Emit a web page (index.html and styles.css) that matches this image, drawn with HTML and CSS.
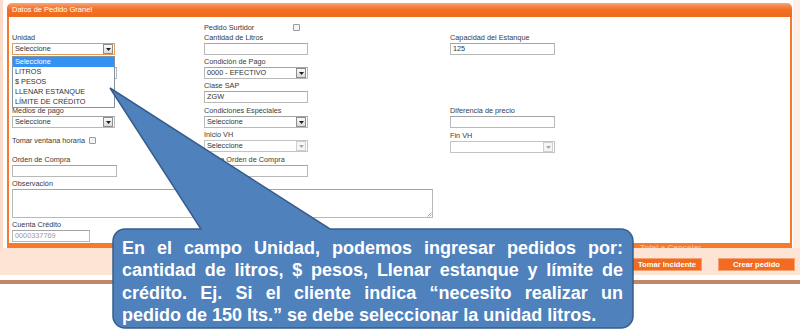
FILE: index.html
```html
<!DOCTYPE html>
<html lang="es">
<head>
<meta charset="utf-8">
<title>Datos de Pedido Granel</title>
<link rel="stylesheet" href="styles.css">
</head>
<body>
<div class="frame">
  <div class="panel">
    <div class="panel-head">Datos de Pedido Granel</div>
    <div class="panel-body">
      <div class="form">
        <div class="surtidor c2 r0"><span class="surtidor-lbl">Pedido Surtidor</span><span class="chk"></span></div>

        <div class="field c1 r1 unidad">
          <div class="lbl">Unidad</div>
          <div class="sel focus w103"><span class="val">Seleccione</span><span class="arr"><svg viewBox="0 0 5 3"><path d="M0 0H5L2.5 3Z"/></svg></span></div>
          <ul class="list">
            <li class="hl">Seleccione</li>
            <li>LITROS</li>
            <li>$ PESOS</li>
            <li>LLENAR ESTANQUE</li>
            <li>LÍMITE DE CRÉDITO</li>
          </ul>
        </div>
        <div class="field c2 r1"><div class="lbl">Cantidad de Litros</div><div class="inp w104"></div></div>
        <div class="field c3 r1"><div class="lbl">Capacidad del Estanque</div><div class="inp w105">125</div></div>

        <div class="field c1 r2"><div class="lbl"></div><div class="inp w105"></div></div>
        <div class="field c2 r2"><div class="lbl">Condición de Pago</div><div class="sel w104"><span class="val">0000 - EFECTIVO</span><span class="arr"><svg viewBox="0 0 5 3"><path d="M0 0H5L2.5 3Z"/></svg></span></div></div>

        <div class="field c2 r3"><div class="lbl">Clase SAP</div><div class="inp w104">ZGW</div></div>

        <div class="field c1 r4"><div class="lbl">Medios de pago</div><div class="sel w103"><span class="val">Seleccione</span><span class="arr"><svg viewBox="0 0 5 3"><path d="M0 0H5L2.5 3Z"/></svg></span></div></div>
        <div class="field c2 r4"><div class="lbl">Condiciones Especiales</div><div class="sel w104"><span class="val">Seleccione</span><span class="arr"><svg viewBox="0 0 5 3"><path d="M0 0H5L2.5 3Z"/></svg></span></div></div>
        <div class="field c3 r4"><div class="lbl">Diferencia de precio</div><div class="inp w105"></div></div>

        <div class="ventana c1 r5"><span>Tomar ventana horaria</span><span class="chk"></span></div>
        <div class="field c2 r5"><div class="lbl">Inicio VH</div><div class="sel dis w104"><span class="val">Seleccione</span><span class="arr"><svg viewBox="0 0 5 3"><path d="M0 0H5L2.5 3Z"/></svg></span></div></div>
        <div class="field c3 r5 low"><div class="lbl">Fin VH</div><div class="sel dis w105"><span class="val"></span><span class="arr"><svg viewBox="0 0 5 3"><path d="M0 0H5L2.5 3Z"/></svg></span></div></div>

        <div class="field c1 r6"><div class="lbl">Orden de Compra</div><div class="inp w105"></div></div>
        <div class="field c2 r6"><div class="lbl">Fecha Orden de Compra</div><div class="inp w104"></div></div>

        <div class="field c12 r7"><div class="lbl">Observación</div><div class="area"><svg class="grip" viewBox="0 0 6 6"><path d="M5.5 1.5L1.5 5.5M5.5 3.5L3.5 5.5"/></svg></div></div>

        <div class="field c1 r8"><div class="lbl">Cuenta Crédito</div><div class="inp w78 muted">0000337769</div></div>
      </div>
    </div>
    <div class="panel-foot"><span class="total">Total a Cancelar</span></div>
  </div>
</div>
<div class="band">
  <button class="btn btn-tomar">Tomar Incidente</button>
  <button class="btn btn-crear">Crear pedido</button>
</div>
<div class="rule"></div>

<div class="callout">
  <svg class="callout-shape" viewBox="0 0 800 333" width="800" height="333"><path d="M125 229L201 229L110 88L330 229L621 229A12 12 0 0 1 633 241L633 316A12 12 0 0 1 621 328L125 328A12 12 0 0 1 113 316L113 241A12 12 0 0 1 125 229Z"/></svg>
  <div class="callout-text">
    <span class="line j">En el campo Unidad, podemos ingresar pedidos por:</span>
    <span class="line j">cantidad de litros, $ pesos, Llenar estanque y límite de</span>
    <span class="line j">crédito. Ej. Si el cliente indica “necesito realizar un</span>
    <span class="line">pedido de 150 lts.” se debe seleccionar la unidad litros.</span>
  </div>
</div>
</body>
</html>
```

FILE: styles.css
```css
html, body {
  margin: 0;
  padding: 0;
}
body {
  width: 800px;
  height: 333px;
  overflow: hidden;
  position: relative;
  background: #fff;
  font-family: "Liberation Sans", Arial, sans-serif;
  font-size: 7.3px;
  color: #3b3b3b;
}

.frame {
  border-left: 3px solid #fcdcc9;
  border-right: 7px solid #fdefe6;
  padding: 3px 1px 0 4px;
}

.panel-head {
  height: 14px;
  line-height: 14px;
  padding-left: 5px;
  border-radius: 5px 5px 0 0;
  background: linear-gradient(#f9a779 0, #f5874a 3px, #f26f22 7px, #f06a1c 100%);
  color: #fff;
  font-size: 7.5px;
}

.panel-body {
  border-left: 2px solid #f37a2e;
  border-right: 2px solid #f37a2e;
  padding: 5px 0 0 3px;
  background: #fff;
}

.form {
  display: grid;
  grid-template-columns: 192px 246px 1fr;
  grid-template-rows: 11px 24px 24px 25px 24px 25px 24px 41px 23px;
}

.c1 { grid-column: 1; }
.c2 { grid-column: 2; }
.c3 { grid-column: 3; }
.c12 { grid-column: 1 / 3; }
.r0 { grid-row: 1; }
.r1 { grid-row: 2; }
.r2 { grid-row: 3; }
.r3 { grid-row: 4; }
.r4 { grid-row: 5; }
.r5 { grid-row: 6; }
.r6 { grid-row: 7; }
.r7 { grid-row: 8; }
.r8 { grid-row: 9; }

.field {
  display: flex;
  flex-direction: column;
  align-items: flex-start;
  position: relative;
}
.field.low { padding-top: 1px; }

.lbl {
  height: 10px;
  line-height: 10px;
  white-space: nowrap;
}

.inp, .sel {
  height: 12px;
  box-sizing: border-box;
  border: 1px solid #b8b8b8;
  border-top-color: #a5a5a5;
  background: #fff;
  line-height: 10px;
  padding-left: 2px;
  white-space: nowrap;
  color: #333;
}
.w78 { width: 78px; }
.w103 { width: 103px; }
.w104 { width: 104px; }
.w105 { width: 105px; }
.muted { color: #9a9a9a; }

.sel {
  display: flex;
  align-items: center;
  justify-content: space-between;
  padding-right: 1px;
}
.sel.focus { border-color: #e49c5a; }
.arr {
  width: 8px;
  height: 8px;
  border: 1px solid #8c8c8c;
  background: linear-gradient(#fbfbfb, #dadada);
  display: flex;
  align-items: center;
  justify-content: center;
}
.arr svg {
  width: 5px;
  height: 3px;
  fill: #1e1e1e;
}
.sel.dis { border-color: #c4c4c4; }
.sel.dis .arr { border-color: #cfcfcf; background: #f6f6f6; }
.sel.dis .arr svg { fill: #a8a8a8; }

.list {
  position: absolute;
  top: 23px;
  left: 0;
  width: 103px;
  margin: 0;
  padding: 0;
  list-style: none;
  box-sizing: border-box;
  border: 1px solid #7f92a8;
  background: #fff;
  z-index: 2;
}
.list li {
  height: 10px;
  line-height: 10px;
  padding-left: 2px;
  color: #333;
}
.list li.hl {
  background: #3592f5;
  color: #fff;
}

.surtidor {
  display: flex;
  align-items: center;
  height: 11px;
}
.surtidor-lbl { width: 89px; }

.chk {
  width: 7px;
  height: 7px;
  box-sizing: border-box;
  border: 1px solid #9a9a9a;
  border-radius: 1px;
  background: #f4f4f4;
}

.ventana {
  display: flex;
  align-items: center;
  gap: 4px;
  padding-top: 6px;
  height: 9px;
}

.area {
  width: 421px;
  height: 29px;
  box-sizing: border-box;
  border: 1px solid #b8b8b8;
  border-top-color: #a5a5a5;
  background: #fff;
  position: relative;
}
.grip {
  position: absolute;
  right: 0;
  bottom: 0;
  width: 6px;
  height: 6px;
  stroke: #9a9a9a;
  stroke-width: 0.8;
}

.panel-foot {
  height: 5px;
  background: #f47a2c;
  overflow: hidden;
  padding-left: 633px;
}
.total {
  display: block;
  color: #fbb88f;
  font-weight: bold;
  font-size: 8px;
  line-height: 9px;
}

.band {
  height: 27px;
  background: #fde4d4;
  display: flex;
  justify-content: flex-end;
  align-items: flex-start;
  gap: 16px;
  padding: 10px 5px 0 0;
  box-sizing: border-box;
}
.btn {
  height: 13px;
  margin: 0;
  padding: 0;
  border: 1px solid #f5a172;
  background: #f26b20;
  color: #fff;
  font-family: "Liberation Sans", Arial, sans-serif;
  font-size: 7.6px;
  font-weight: bold;
  line-height: 11px;
}
.btn-tomar { width: 70px; }
.btn-crear { width: 77px; }

.rule {
  height: 4px;
  margin-top: 5px;
  background: #c4866a;
}

.callout {
  position: absolute;
  left: 0;
  top: 0;
  width: 800px;
  height: 333px;
  pointer-events: none;
  z-index: 5;
}
.callout-shape {
  position: absolute;
  left: 0;
  top: 0;
}
.callout-shape path {
  fill: #4f81bd;
  stroke: #385d8a;
  stroke-width: 1.5;
}
.callout-text {
  position: absolute;
  left: 122px;
  top: 237px;
  width: 501px;
  color: #fff;
  font-family: "Liberation Sans", Arial, sans-serif;
  font-weight: bold;
  font-size: 18px;
  line-height: 22.3px;
}
.line {
  display: block;
  white-space: nowrap;
}
.line.j {
  text-align: justify;
  text-align-last: justify;
  white-space: normal;
}
```
